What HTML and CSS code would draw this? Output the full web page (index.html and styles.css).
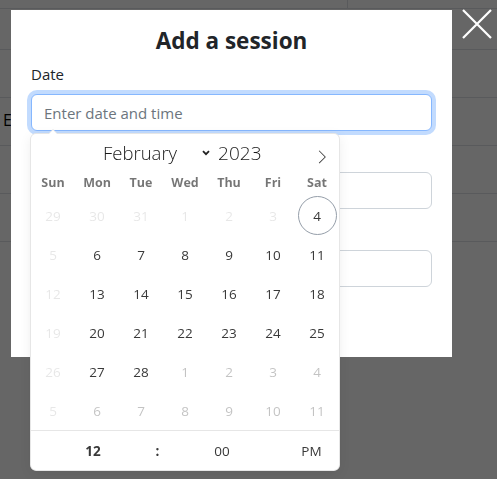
FILE: index.html
```html
<!DOCTYPE html>
<html lang="en">
<head>
<meta charset="utf-8">
<title>Add a session</title>
<link rel="stylesheet" href="styles.css">
</head>
<body>
<div class="table">
  <div class="row-top"><div class="top-cell"></div></div>
  <div class="row head"></div>
  <div class="row"></div>
  <div class="row"><span class="cell-text">Email</span></div>
  <div class="row"></div>
  <div class="row"></div>
  <div class="table-end"></div>
</div>

<div class="backdrop">
  <div class="modal">
    <h4 class="modal-title">Add a session</h4>
    <div class="field">
      <label class="label">Date</label>
      <input class="control focus" type="text" placeholder="Enter date and time">
    </div>
    <div class="field">
      <div class="label"></div>
      <input class="control" type="text" aria-label="Duration">
    </div>
    <div class="field">
      <div class="label"></div>
      <input class="control" type="text" aria-label="Notes">
    </div>

    <div class="cal">
      <div class="cal-months">
        <div class="cal-current">
          <span class="cal-month">February</span>
          <svg class="cal-chevron" width="8" height="6" viewBox="0 0 8 6"><polyline points="1,1.2 4,4.2 7,1.2" fill="none" stroke="#222" stroke-width="1.8"/></svg>
          <span class="cal-year">2023</span>
        </div>
        <svg class="cal-next" width="14" height="14" viewBox="0 0 17 17"><path d="M13.207 8.472l-7.854 7.854-0.707-0.707 7.146-7.146-7.146-7.147 0.707-0.707 7.854 7.853z" fill="#3c3c3c"/></svg>
      </div>
      <div class="cal-weekdays">
        <span>Sun</span><span>Mon</span><span>Tue</span><span>Wed</span><span>Thu</span><span>Fri</span><span>Sat</span>
      </div>
      <div class="cal-days">
        <span class="day off">29</span><span class="day off">30</span><span class="day off">31</span><span class="day off">1</span><span class="day off">2</span><span class="day off">3</span><span class="day today">4</span>
        <span class="day off">5</span><span class="day">6</span><span class="day">7</span><span class="day">8</span><span class="day">9</span><span class="day">10</span><span class="day">11</span>
        <span class="day off">12</span><span class="day">13</span><span class="day">14</span><span class="day">15</span><span class="day">16</span><span class="day">17</span><span class="day">18</span>
        <span class="day off">19</span><span class="day">20</span><span class="day">21</span><span class="day">22</span><span class="day">23</span><span class="day">24</span><span class="day">25</span>
        <span class="day off">26</span><span class="day">27</span><span class="day">28</span><span class="day next">1</span><span class="day next">2</span><span class="day next">3</span><span class="day next">4</span>
        <span class="day off">5</span><span class="day next">6</span><span class="day next">7</span><span class="day next">8</span><span class="day next">9</span><span class="day next">10</span><span class="day next">11</span>
      </div>
      <div class="cal-time">
        <span class="t-hour">12</span>
        <span class="t-sep">:</span>
        <span class="t-min">00</span>
        <span class="t-ampm">PM</span>
      </div>
    </div>
  </div>
  <svg class="close" width="32" height="30" viewBox="0 0 32 30"><path d="M2 1 L30 29 M30 1 L2 29" stroke="#fff" stroke-width="2.2" fill="none"/></svg>
</div>
</body>
</html>
```
FILE: styles.css
```css
* { box-sizing: border-box; }
html, body { margin: 0; padding: 0; }
body {
  font-family: "Open Sans", "Noto Sans", sans-serif;
  color: #212529;
  background: #fff;
  width: 497px;
  height: 479px;
  overflow: hidden;
}

.table { width: 497px; }
.row-top { height: 8px; display: flex; }
.top-cell { width: 348px; border-right: 1px solid #dee2e6; }
.row {
  border-top: 1px solid #dee2e6;
  height: 48px;
  display: flex;
  align-items: center;
  padding-left: 3px;
  font-size: 16px;
  color: #000;
}
.row.head { height: 41px; }
.cell-text { margin-top: -4px; }
.table-end { border-top: 1px solid #dee2e6; }

.backdrop {
  position: fixed;
  inset: 0;
  background: rgba(0, 0, 0, 0.6);
  padding: 10px 0 0 11px;
}
.modal {
  position: relative;
  width: 441px;
  background: #fff;
  padding: 16px 20px 70px;
}
.modal-title {
  margin: 0 0 7px;
  text-align: center;
  font-size: 22.5px;
  line-height: 29px;
  font-weight: 700;
  color: #212529;
}
.field + .field { margin-top: 9px; }
.label {
  display: block;
  height: 24px;
  font-size: 15px;
  line-height: 24px;
  margin-bottom: 8px;
  color: #212529;
}
.control {
  display: block;
  width: 401px;
  height: 37px;
  padding: 0 12px;
  border: 1px solid #ced4da;
  border-radius: 6px;
  font-family: "Open Sans", "Noto Sans", sans-serif;
  font-size: 15px;
  color: #212529;
  background: #fff;
  outline: none;
}
.control.focus {
  border-color: #86b7fe;
  box-shadow: 0 0 0 4px rgba(13, 110, 253, 0.25);
}
.control::placeholder { color: #6c757d; }

.close { position: absolute; left: 461px; top: 9px; }

/* calendar popup */
.cal {
  position: absolute;
  left: 20px;
  top: 124px;
  width: 308px;
  background: #fff;
  border-radius: 5px;
  box-shadow: 1px 0 0 #e6e6e6, -1px 0 0 #e6e6e6, 0 1px 0 #e6e6e6, 0 -1px 0 #e6e6e6, 0 3px 13px rgba(0, 0, 0, 0.08);
  font-size: 14px;
  color: #393939;
}
.cal::before, .cal::after {
  content: "";
  position: absolute;
  bottom: 100%;
  left: 22px;
  border: solid transparent;
  height: 0;
  width: 0;
}
.cal::before { border-width: 5px; margin-left: -5px; border-bottom-color: #e6e6e6; }
.cal::after { border-width: 4px; margin-left: -4px; border-bottom-color: #fff; }

.cal-months { position: relative; height: 34px; }
.cal-current {
  display: flex;
  align-items: center;
  height: 34px;
  padding: 3px 0 0 72px;
  font-size: 18.5px;
  font-weight: 300;
  color: rgba(0, 0, 0, 0.9);
}
.cal-chevron { margin-left: 25px; }
.cal-year { margin-left: 8px; font-size: 19px; }
.cal-next { position: absolute; left: 284px; top: 16px; }

.cal-weekdays {
  display: grid;
  grid-template-columns: repeat(7, 44px);
  height: 28px;
  align-items: center;
  text-align: center;
  font-size: 12.5px;
  font-weight: 700;
  color: rgba(0, 0, 0, 0.54);
}
.cal-days {
  display: grid;
  grid-template-columns: repeat(7, 44px);
  grid-auto-rows: 39px;
}
.day {
  display: flex;
  align-items: center;
  justify-content: center;
  width: 39px;
  height: 39px;
  justify-self: center;
  border: 1px solid transparent;
  border-radius: 50%;
  font-size: 13.5px;
  color: #393939;
}
.day.off { color: rgba(57, 57, 57, 0.12); }
.day.next { color: rgba(57, 57, 57, 0.3); }
.day.today { border-color: #959ea9; }

.cal-time {
  display: flex;
  align-items: center;
  height: 40px;
  border-top: 1px solid #e6e6e6;
  font-size: 13.5px;
  color: #393939;
}
.cal-time span { text-align: center; }
.t-hour { width: 124px; font-weight: 700; }
.t-sep { width: 5px; font-weight: 700; }
.t-min { width: 124px; }
.t-ampm { width: 55px; }
```
